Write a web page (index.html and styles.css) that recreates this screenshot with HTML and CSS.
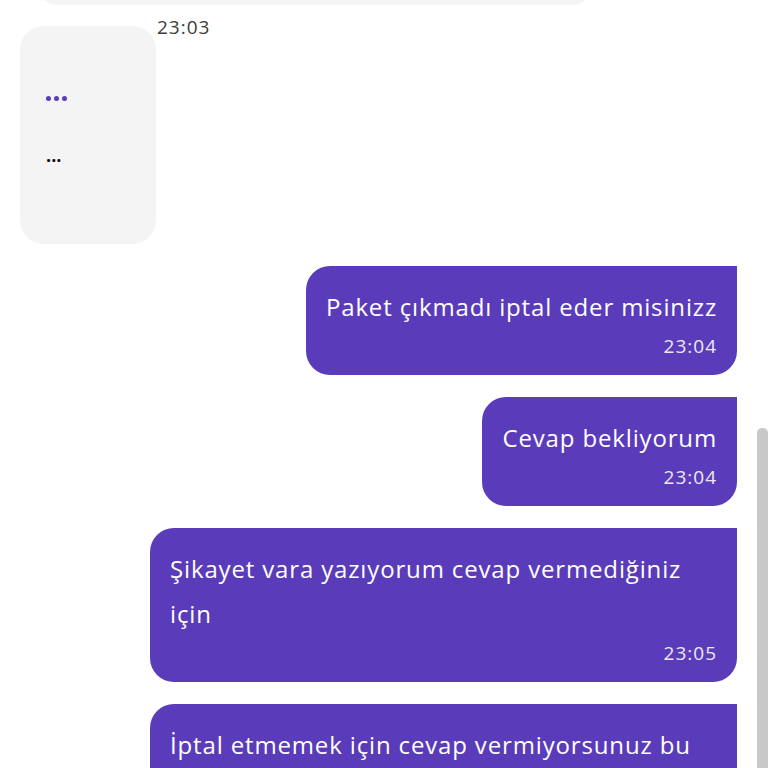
FILE: index.html
```html
<!DOCTYPE html>
<html lang="tr">
<head>
<meta charset="utf-8">
<link rel="stylesheet" href="styles.css">
</head>
<body>
<div class="chat">
  <div class="prev-bubble"></div>
  <div class="in-row">
    <div class="in-bubble">
      <div class="typing"><span class="dot"></span><span class="dot"></span><span class="dot"></span></div>
      <div class="ellipsis">...</div>
    </div>
    <div class="in-time">23:03</div>
  </div>
  <div class="out-bubble">
    <div class="msg">Paket çıkmadı iptal eder misinizz</div>
    <div class="time">23:04</div>
  </div>
  <div class="out-bubble">
    <div class="msg">Cevap bekliyorum</div>
    <div class="time">23:04</div>
  </div>
  <div class="out-bubble">
    <div class="msg">Şikayet vara yazıyorum cevap vermediğiniz için</div>
    <div class="time">23:05</div>
  </div>
  <div class="out-bubble">
    <div class="msg">İptal etmemek için cevap vermiyorsunuz bu kadar basit bir işlem için neden bu kadar bekletiyorsunuz</div>
    <div class="time">23:06</div>
  </div>
</div>
<div class="scrollbar"></div>
</body>
</html>
```

FILE: styles.css
```css
html, body {
  margin: 0;
  padding: 0;
  width: 768px;
  height: 768px;
  overflow: hidden;
  background: #ffffff;
  font-family: "Open Sans", "Liberation Sans", sans-serif;
}

.chat {
  display: flex;
  flex-direction: column;
  align-items: flex-end;
  padding: 0 31px 0 20px;
  gap: 22px;
}

.prev-bubble {
  align-self: flex-start;
  margin-left: 15px;
  margin-top: -40px;
  width: 560px;
  height: 45px;
  background: #f4f4f5;
  border-radius: 0 0 24px 24px;
}

.in-row {
  align-self: flex-start;
  display: flex;
  align-items: flex-start;
  margin-top: -11px;
}

.in-bubble {
  margin-top: 10px;
  width: 136px;
  height: 218px;
  box-sizing: border-box;
  padding: 69px 26px 0;
  background: #f4f4f5;
  border-radius: 24px;
}

.typing {
  display: flex;
  gap: 3px;
  height: 6px;
  align-items: center;
}

.dot {
  width: 5px;
  height: 5px;
  border-radius: 50%;
  background: #5a3cba;
}

.ellipsis {
  margin-top: 44px;
  font-size: 18px;
  line-height: 20px;
  color: #111;
  font-weight: 700;
}

.in-time {
  margin-left: 1px;
  font-size: 19px;
  letter-spacing: 1px;
  line-height: 22px;
  color: #3c3c3c;
}

.out-bubble {
  max-width: 587px;
  box-sizing: border-box;
  padding: 18px 20px 18px 20px;
  background: #5a3cba;
  color: #ffffff;
  border-radius: 24px 0 24px 24px;
}

.msg {
  font-size: 24px;
  letter-spacing: 0.85px;
  line-height: 45px;
}

.time {
  margin-top: 6px;
  text-align: right;
  font-size: 19px;
  letter-spacing: 1px;
  line-height: 22px;
  color: #ece8f7;
}

.scrollbar {
  position: absolute;
  left: 757px;
  top: 428px;
  width: 11px;
  height: 340px;
  background: #c8c8c8;
  border-radius: 5px 5px 0 0;
}
```
